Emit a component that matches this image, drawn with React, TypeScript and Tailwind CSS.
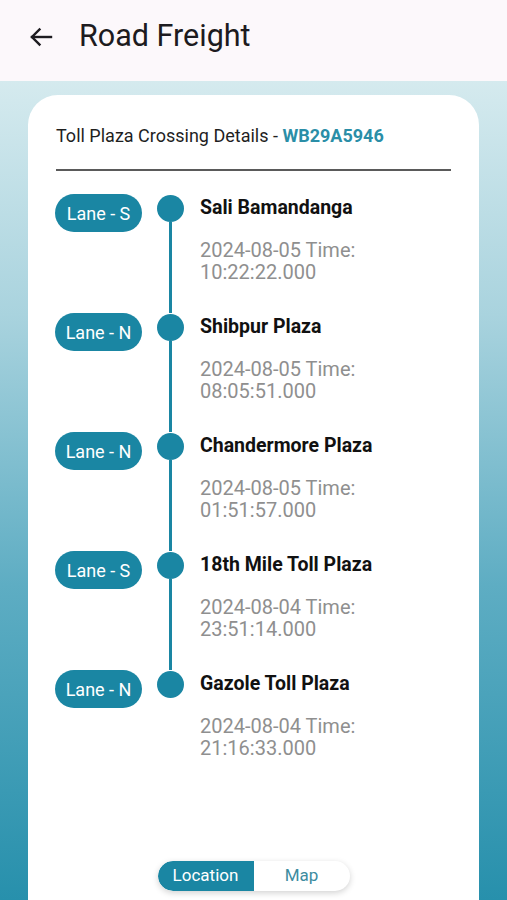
import React from 'react';

const crossings = [
  { lane: 'Lane - S', plaza: 'Sali Bamandanga', date: '2024-08-05', time: '10:22:22.000' },
  { lane: 'Lane - N', plaza: 'Shibpur Plaza', date: '2024-08-05', time: '08:05:51.000' },
  { lane: 'Lane - N', plaza: 'Chandermore Plaza', date: '2024-08-05', time: '01:51:57.000' },
  { lane: 'Lane - S', plaza: '18th Mile Toll Plaza', date: '2024-08-04', time: '23:51:14.000' },
  { lane: 'Lane - N', plaza: 'Gazole Toll Plaza', date: '2024-08-04', time: '21:16:33.000' },
];

export default function App() {
  return (
    <div className="h-[900px] w-[507px] flex flex-col overflow-hidden font-['Roboto',sans-serif] bg-[linear-gradient(to_bottom,#e4f2f4_0%,#a9d3de_35%,#5eadc3_65%,#2790ac_100%)]">
      {/* App bar */}
      <header className="h-[81px] shrink-0 bg-[#fcf8fb] flex items-center pl-[29px] pb-[8px]">
        <svg width="24" height="20" viewBox="0 0 24 20" fill="none" stroke="#1d1b20" strokeWidth="2.4" strokeLinecap="square">
          <path d="M3 10H22" />
          <path d="M10.5 2.5L3 10l7.5 7.5" />
        </svg>
        <h1 className="ml-[26px] text-[30.5px] leading-none text-[#1d1b20]">Road Freight</h1>
      </header>

      {/* Card */}
      <div className="mx-[28px] mt-[14px] flex-1 flex flex-col rounded-t-[30px] bg-white px-[28px] pt-[30px]">
        <div className="text-[18px] leading-[22px] text-[#1f1f1f]">
          Toll Plaza Crossing Details - <span className="font-bold text-[#2a8ea7]">WB29A5946</span>
        </div>
        <div className="mt-[22px] h-[2px] bg-[#5a5a5a]" />

        <div className="mt-[23px] flex flex-col">
          {crossings.map((c, i) => {
            const last = i === crossings.length - 1;
            return (
              <div key={i} className={`flex items-start ${last ? '' : 'h-[119px]'}`}>
                <div className="ml-[-1px] w-[87px] h-[38px] shrink-0 rounded-full bg-[#1a86a3] text-white text-[18px] flex items-center justify-center">
                  {c.lane}
                </div>
                <div className="ml-[15px] w-[27px] self-stretch shrink-0 flex flex-col items-center">
                  <div className="w-[27px] h-[27px] rounded-full bg-[#1a86a3] mt-[1px]" />
                  {!last && <div className="w-[3px] flex-1 bg-[#1a86a3]" />}
                </div>
                <div className="ml-[16px] pt-[1px]">
                  <div className="text-[19.5px] leading-[26px] font-bold text-[#111]">{c.plaza}</div>
                  <div className="mt-[18px] text-[20px] leading-[22px] text-[#8f8f8f]">
                    {c.date} Time:
                    <br />
                    {c.time}
                  </div>
                </div>
              </div>
            );
          })}
        </div>

        {/* Segmented toggle */}
        <div className="mt-auto mb-[9px] self-center flex h-[30px] w-[192px] rounded-full bg-white shadow-[0_2px_6px_rgba(0,0,0,0.18)] overflow-hidden">
          <button className="flex-1 bg-[#1a86a3] text-white text-[17px] rounded-l-full">Location</button>
          <button className="flex-1 text-[#3d8c9f] text-[17px]">Map</button>
        </div>
      </div>
    </div>
  );
}
